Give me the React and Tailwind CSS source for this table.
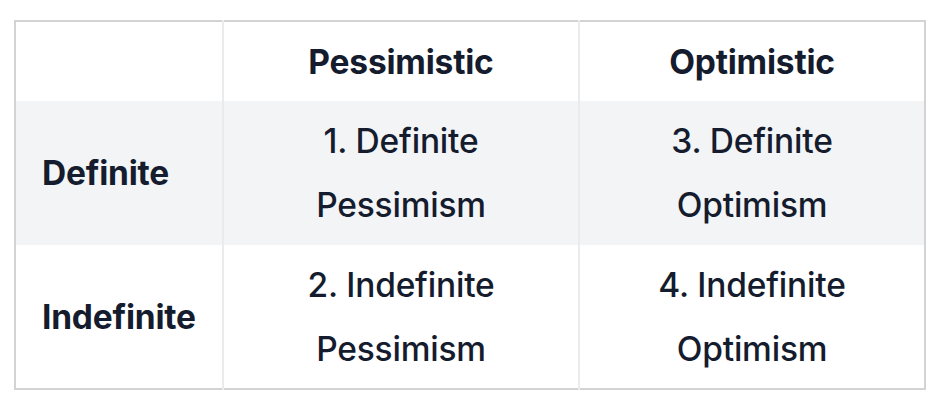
export default function App() {
  const font = { fontFamily: "Inter, 'Noto Sans', sans-serif" };
  return (
    <div className="w-[948px] h-[408px] bg-white pt-[20px] pl-[14px]" style={font}>
      <table className="border-collapse border-2 border-[#d5d2d4] text-[#141c2e] text-[33.5px] leading-[64px] tracking-[-0.2px]">
        <tbody>
          <tr className="bg-white">
            <td className="w-[208px] border-r-2 border-[#ebebeb] h-[80px]"></td>
            <th className="w-[356px] border-r-2 border-[#ebebeb] font-bold text-center">Pessimistic</th>
            <th className="w-[346px] font-bold text-center">Optimistic</th>
          </tr>
          <tr className="bg-[#f3f4f6]">
            <td className="border-r-2 border-[#ebebeb] font-bold pl-[26px] h-[144px]">Definite</td>
            <td className="border-r-2 border-[#ebebeb] font-medium text-center">1. Definite<br />Pessimism</td>
            <td className="font-medium text-center">3. Definite<br />Optimism</td>
          </tr>
          <tr className="bg-white">
            <td className="border-r-2 border-[#ebebeb] font-bold pl-[26px] h-[144px]">Indefinite</td>
            <td className="border-r-2 border-[#ebebeb] font-medium text-center">2. Indefinite<br />Pessimism</td>
            <td className="font-medium text-center">4. Indefinite<br />Optimism</td>
          </tr>
        </tbody>
      </table>
    </div>
  );
}
